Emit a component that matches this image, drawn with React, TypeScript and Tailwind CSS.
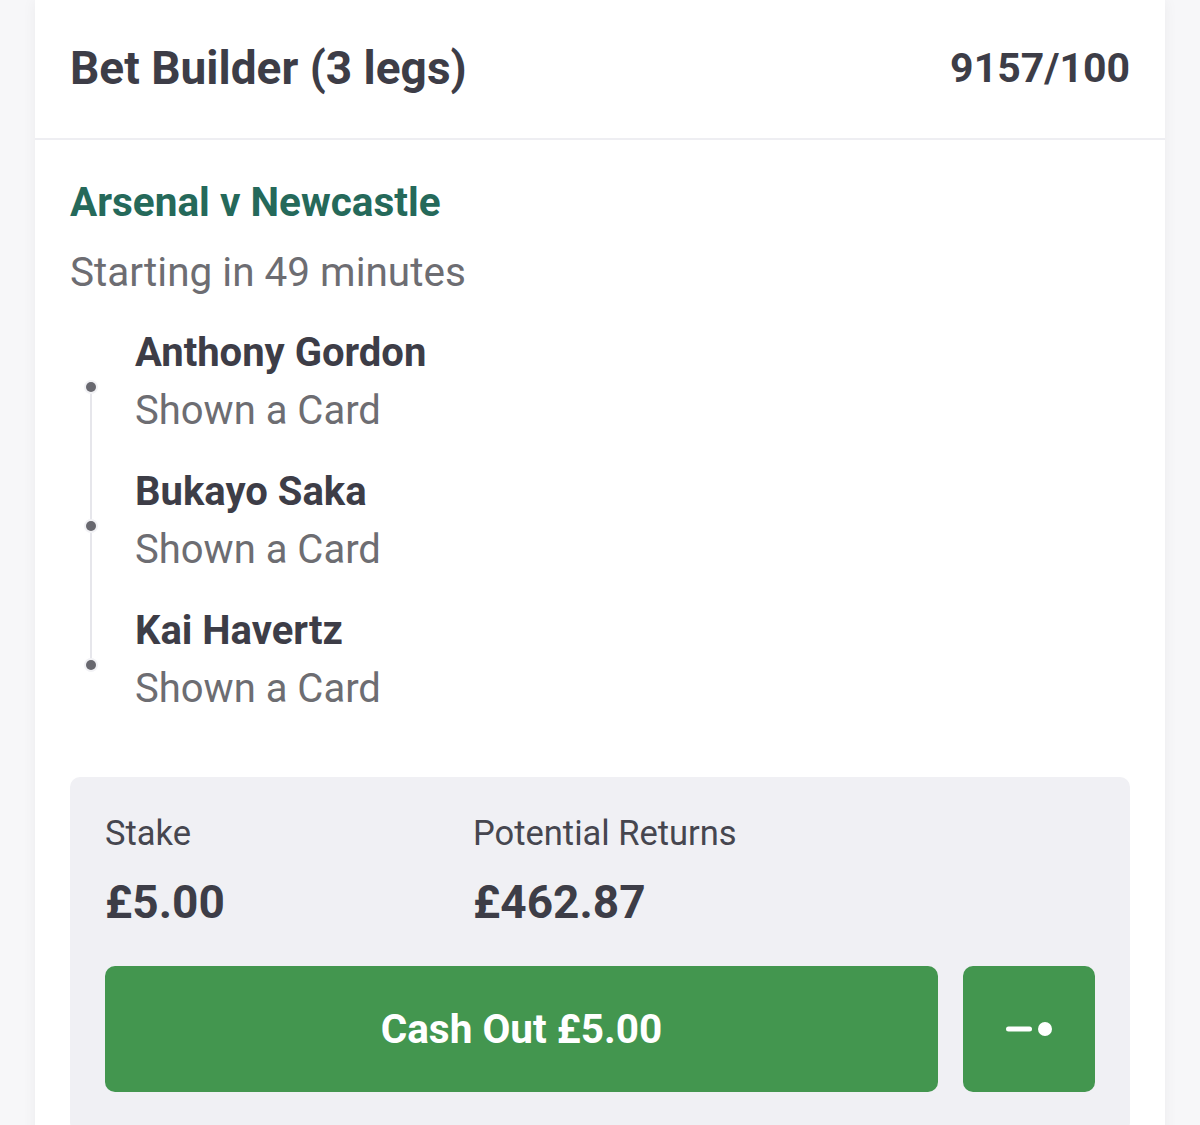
import React from "react";

const legs = [
  { name: "Anthony Gordon", market: "Shown a Card" },
  { name: "Bukayo Saka", market: "Shown a Card" },
  { name: "Kai Havertz", market: "Shown a Card" },
];

export default function App() {
  return (
    <div
      className="w-[1200px] h-[1125px] overflow-hidden bg-[#f7f7f9] px-[35px]"
      style={{ fontFamily: "Roboto, 'Noto Sans', sans-serif" }}
    >
      <div className="h-[1200px] bg-white shadow-[0_0_14px_rgba(0,0,0,0.05)]">
        <div className="h-[140px] flex items-center justify-between px-[35px] border-b-2 border-[#eeeef2]">
          <span className="text-[46px] font-bold text-[#3d3d47] leading-none -mt-[2px]">Bet Builder (3 legs)</span>
          <span className="text-[41px] font-bold text-[#3d3d47] leading-none -mt-[2px]">9157/100</span>
        </div>
        <div className="px-[35px] pt-[27px]">
          <div className="text-[40.5px] font-bold text-[#25695a] leading-[70px]">Arsenal v Newcastle</div>
          <div className="text-[40.5px] text-[#6d6d72] leading-[70px]">Starting in 49 minutes</div>
          <div className="relative mt-[17px]">
            <div className="absolute left-[20px] top-[63px] w-[2px] h-[278px] bg-[#e6e6eb]" />
            {legs.map((l) => (
              <div key={l.name} className="flex pb-[23px]">
                <div className="relative w-[65px] shrink-0">
                  <div className="absolute left-[16px] top-[58px] w-[10px] h-[10px] rounded-full bg-[#68686f] ring-2 ring-[#f2f2f5]" />
                </div>
                <div>
                  <div className="text-[40px] font-bold text-[#3d3d47] leading-[58px]">{l.name}</div>
                  <div className="text-[40px] text-[#6d6d72] leading-[58px]">{l.market}</div>
                </div>
              </div>
            ))}
          </div>
          <div className="mt-[36px] rounded-[10px] bg-[#f0f0f4] px-[35px] pt-[33px] pb-[40px]">
            <div className="flex">
              <div className="w-[368px]">
                <div className="text-[34.5px] text-[#46464f] leading-[46px]">Stake</div>
                <div className="text-[46px] font-bold text-[#3d3d47] leading-[56px] mt-[18px]">£5.00</div>
              </div>
              <div>
                <div className="text-[34.5px] text-[#46464f] leading-[46px]">Potential Returns</div>
                <div className="text-[46px] font-bold text-[#3d3d47] leading-[56px] mt-[18px]">£462.87</div>
              </div>
            </div>
            <div className="flex gap-[25px] mt-[36px]">
              <button className="flex-1 h-[126px] rounded-[10px] bg-[#43964f] text-white text-[40.5px] font-bold flex items-center justify-center">
                Cash Out £5.00
              </button>
              <button className="w-[132px] h-[126px] rounded-[10px] bg-[#43964f] flex items-center justify-center">
                <svg width="52" height="20" viewBox="0 0 52 20">
                  <rect x="3" y="7.5" width="26" height="5" rx="2.5" fill="white" />
                  <circle cx="42" cy="10" r="7" fill="white" />
                </svg>
              </button>
            </div>
          </div>
        </div>
      </div>
    </div>
  );
}
